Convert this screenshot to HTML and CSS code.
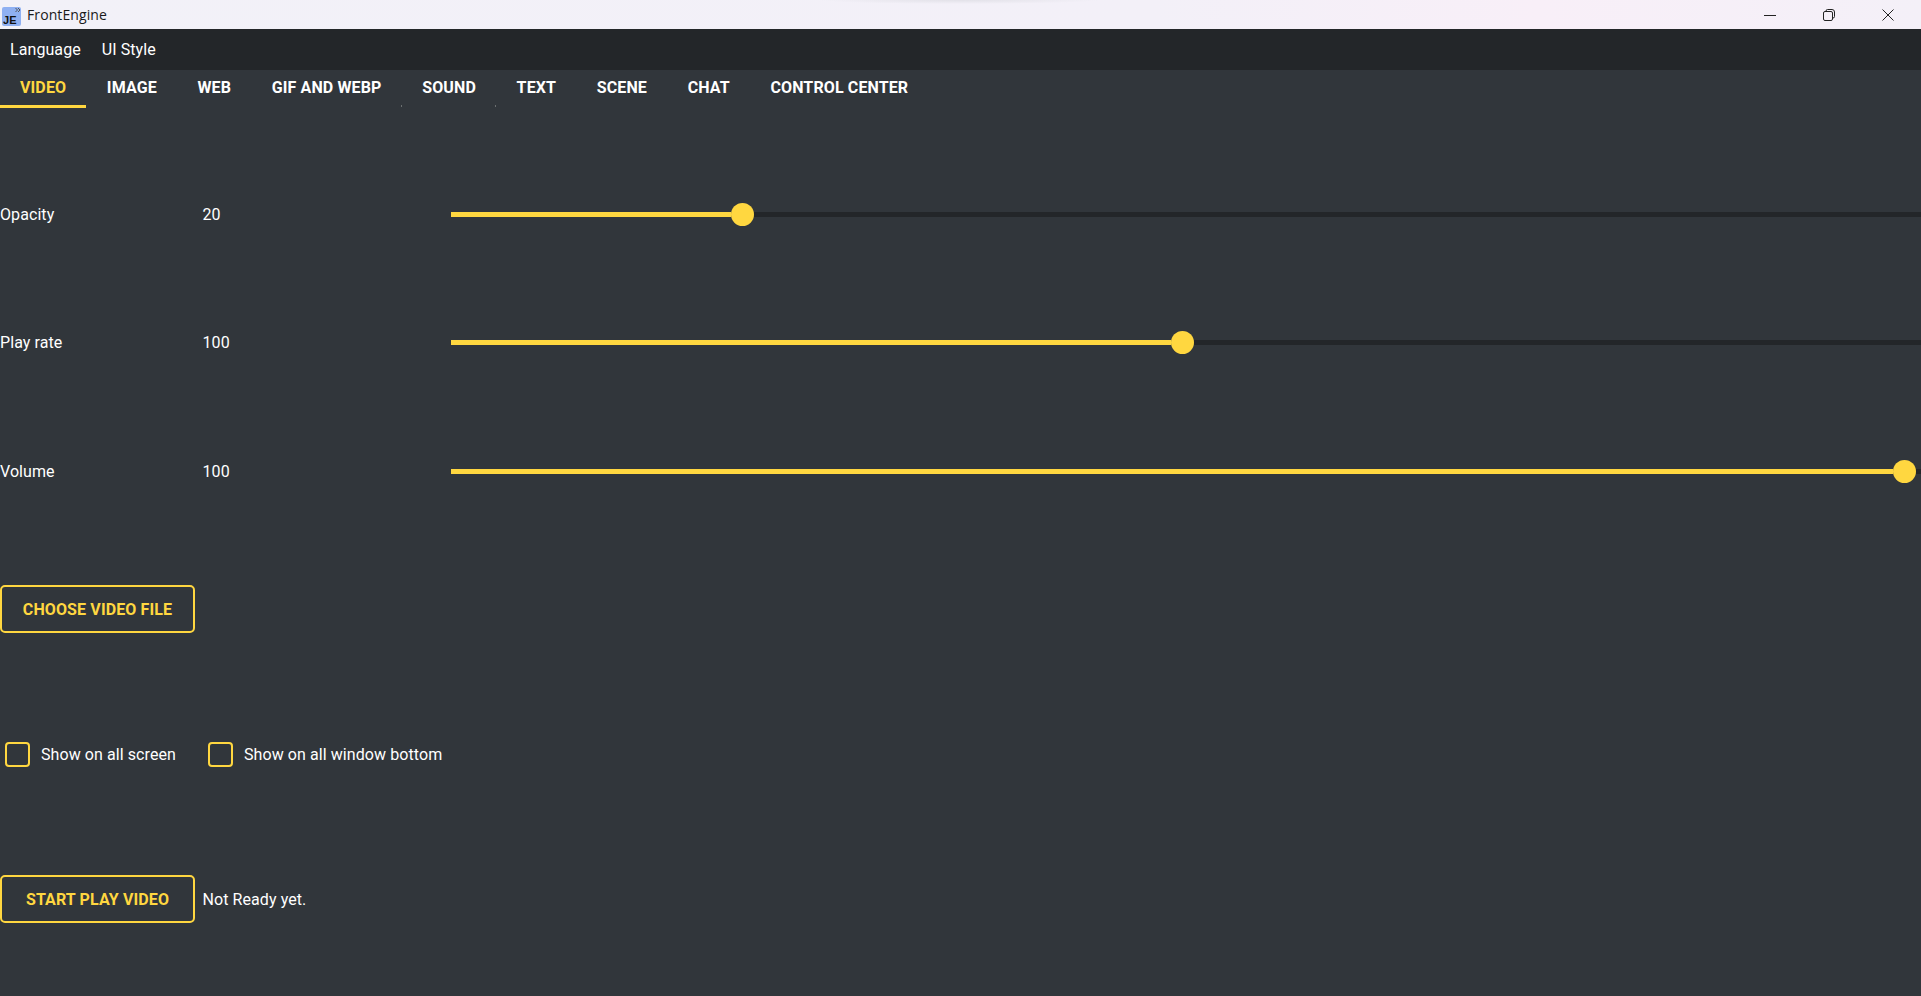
FILE: index.html
```html
<!DOCTYPE html>
<html>
<head>
<title>FrontEngine</title>
<link rel="stylesheet" href="styles.css">
</head>
<body>

<!-- title bar -->
<div class="title-bar">
    <svg class="app-icon" width="20" height="20" viewBox="0 0 20 20">
        <rect x="1" y="0" width="19" height="19" rx="2" fill="#8fb0f2"/>
        <path d="M14.500 1l2 2-2 2M17 1l2 2-2 2" fill="none" stroke="#555" stroke-width="1"/>
        <text x="2" y="17" class="app-icon-text">JE</text>
    </svg>
    <span class="app-name">FrontEngine</span>
    <div class="win-buttons">
        <svg class="win-btn" width="12" height="12" viewBox="0 0 12 12">
            <path d="M0 6.500h12" stroke="#222" fill="none"/>
        </svg>
        <svg class="win-btn" width="12" height="12" viewBox="0 0 12 12">
            <path d="M3 2.500V2a1.500 1.500 0 0 1 1.500-1.500H9A2.500 2.500 0 0 1 11.500 3v4.500A1.500 1.500 0 0 1 10 9h-.5" stroke="#222" fill="none"/>
            <rect x=".5" y="2.500" width="9" height="9" rx="1.500" stroke="#222" fill="none"/>
        </svg>
        <svg class="win-btn" width="12" height="12" viewBox="0 0 12 12">
            <path d="M.5.500l11 11M11.500.500l-11 11" stroke="#222" fill="none"/>
        </svg>
    </div>
</div>

<!-- menu -->
<div class="menu-bar">
    <span class="menu-item">Language</span>
    <span class="menu-item">UI Style</span>
</div>

<!-- tabs -->
<div class="tab-bar">
    <span class="tab tab-active">VIDEO</span>
    <span class="tab">IMAGE</span>
    <span class="tab">WEB</span>
    <span class="tab tab-tick">GIF AND WEBP</span>
    <span class="tab tab-tick">SOUND</span>
    <span class="tab">TEXT</span>
    <span class="tab">SCENE</span>
    <span class="tab">CHAT</span>
    <span class="tab">CONTROL CENTER</span>
</div>

<!-- video tab -->
<div class="tab-page">

    <div class="row row-slider">
        <span class="label">Opacity</span>
        <span class="value">20</span>
        <div class="slider">
            <div class="slider-fill" style="width: 280px"></div>
            <div class="slider-thumb"></div>
            <div class="slider-rest"></div>
        </div>
    </div>

    <div class="row row-slider">
        <span class="label">Play rate</span>
        <span class="value">100</span>
        <div class="slider">
            <div class="slider-fill" style="width: 720px"></div>
            <div class="slider-thumb"></div>
            <div class="slider-rest"></div>
        </div>
    </div>

    <div class="row row-slider">
        <span class="label">Volume</span>
        <span class="value">100</span>
        <div class="slider">
            <div class="slider-fill" style="width: 1442px"></div>
            <div class="slider-thumb"></div>
            <div class="slider-rest"></div>
        </div>
    </div>

    <div class="row row-button">
        <button class="btn">CHOOSE VIDEO FILE</button>
    </div>

    <div class="row row-check">
        <label class="check"><span class="check-box"></span>Show on all screen</label>
        <label class="check"><span class="check-box"></span>Show on all window bottom</label>
    </div>

    <div class="row row-button">
        <button class="btn">START PLAY VIDEO</button>
        <span class="status">Not Ready yet.</span>
    </div>

</div>

</body>
</html>
```

FILE: styles.css
```css
/*-----------------------------------------------------------------*/
html, body {
    height:             100%;
}

body {
    margin:             0;
    overflow:           hidden;
    display:            flex;
    flex-direction:     column;
    font-family:        Roboto, sans-serif;
    font-size:          16px;
    letter-spacing:     0.08px;
    color:              #fff;
    background:         #31363b;
}

/*-----------------------------------------------------------------*/
.title-bar {
    flex:               none;
    height:             29px;
    display:            flex;
    align-items:        center;
    padding-left:       1px;
    color:              #1a1a1a;
    background:         radial-gradient(ellipse 140px 4px at 960px 0, #e2e1e8, transparent),
                        linear-gradient(90deg, #f2f1f8, #f3f0f8 60%, #f8eff8 80%, #f4f0f8);
}

.app-icon {
    flex:               none;
    margin-top:         4px;
}

.app-icon-text {
    font-family:        "Liberation Sans", sans-serif;
    font-size:          11px;
    font-weight:        bold;
    fill:               #111;
}

.app-name {
    margin-left:        6px;
    font-family:        "Open Sans", sans-serif;
    font-size:          14px;
    letter-spacing:     0.1px;
}

.win-buttons {
    margin-left:        auto;
    margin-right:       27px;
    display:            flex;
    gap:                47px;
}

.win-btn {
    display:            block;
}

/*-----------------------------------------------------------------*/
.menu-bar {
    flex:               none;
    height:             41px;
    display:            flex;
    align-items:        center;
    padding-left:       10px;
    gap:                21px;
    background:         #232629;
}

/*-----------------------------------------------------------------*/
.tab-bar {
    flex:               none;
    height:             38px;
    display:            flex;
    box-sizing:         border-box;
}

.tab {
    position:           relative;
    padding:            8px 20px 0;
    margin-right:       0.7px;
    font-weight:        700;
    letter-spacing:     0.12px;
    box-sizing:         border-box;
}

.tab-active {
    color:              #ffd740;
    border-bottom:      3px solid #ffd740;
}

.tab-tick::after {
    content:            "";
    position:           absolute;
    right:              0;
    bottom:             1px;
    width:              1px;
    height:             2px;
    background:         #6b6f70;
}

/*-----------------------------------------------------------------*/
.tab-page {
    flex:               1;
    padding-top:        42px;
}

.row {
    display:            flex;
    align-items:        center;
}

.row-slider {
    height:             128.500px;
}

.row-button {
    height:             147px;
}

.row-check {
    height:             143px;
    padding-left:       5px;
    gap:                32px;
}

/*-----------------------------------------------------------------*/
.label {
    flex:               none;
    width:              202.500px;
}

.value {
    flex:               none;
    width:              248.500px;
}

.slider {
    flex:               1;
    display:            flex;
    align-items:        center;
}

.slider-fill {
    height:             5px;
    background:         #ffd740;
}

.slider-thumb {
    flex:               none;
    width:              23px;
    height:             23px;
    border-radius:      50%;
    background:         #ffd740;
}

.slider-rest {
    flex:               1;
    height:             5px;
    background:         #232629;
}

/*-----------------------------------------------------------------*/
.btn {
    width:              195px;
    height:             48px;
    padding:            0;
    font-family:        Roboto, sans-serif;
    font-size:          16px;
    font-weight:        700;
    letter-spacing:     0.12px;
    color:              #ffd740;
    background:         transparent;
    border:             2.500px solid #ffd740;
    border-radius:      5px;
}

.status {
    margin-left:        7.500px;
}

/*-----------------------------------------------------------------*/
.check {
    display:            flex;
    align-items:        center;
}

.check-box {
    width:              25px;
    height:             25px;
    margin-right:       11px;
    border:             2px solid #ffd740;
    border-radius:      4px;
    box-sizing:         border-box;
}
```
